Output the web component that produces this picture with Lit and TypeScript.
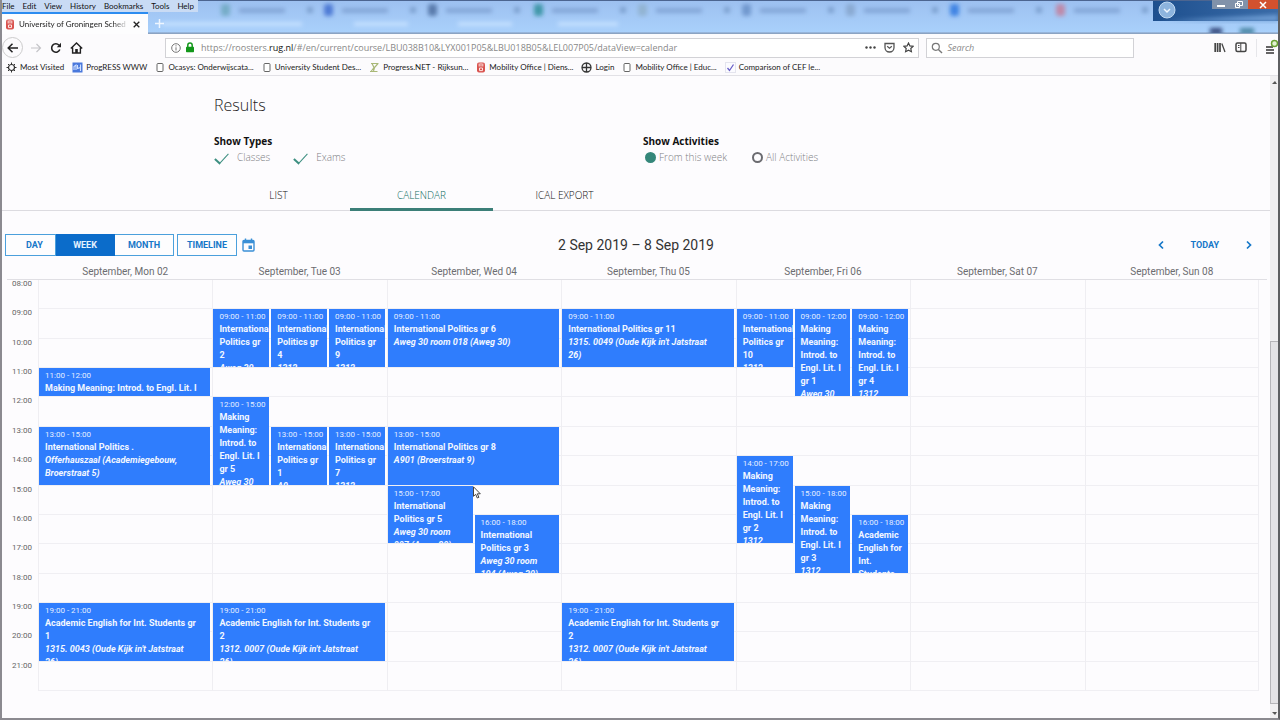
import { LitElement, html, css, svg, nothing } from "lit";
import { customElement, state } from "lit/decorators.js";
import { classMap } from "lit/directives/class-map.js";
import { styleMap } from "lit/directives/style-map.js";

interface Activity {
  from: number;
  to: number;
  title: string;
  place?: string;
  lane?: number;
}

interface Day {
  label: string;
  lanes: number;
  items: Activity[];
}

const FIRST_HOUR = 8;
const HOURS = Array.from({ length: 14 }, (_, i) => FIRST_HOUR + i);

const DAYS: Day[] = [
  {
    label: "September, Mon 02",
    lanes: 1,
    items: [
      { from: 11, to: 12, title: "Making Meaning: Introd. to Engl. Lit. I" },
      { from: 13, to: 15, title: "International Politics .", place: "Offerhauszaal (Academiegebouw, Broerstraat 5)" },
      { from: 19, to: 21, title: "Academic English for Int. Students gr 1", place: "1315. 0043 (Oude Kijk in't Jatstraat 26)" },
    ],
  },
  {
    label: "September, Tue 03",
    lanes: 3,
    items: [
      { from: 9, to: 11, lane: 1, title: "International Politics gr 2", place: "Aweg 30" },
      { from: 9, to: 11, lane: 2, title: "International Politics gr 4", place: "1312" },
      { from: 9, to: 11, lane: 3, title: "International Politics gr 9", place: "1312" },
      { from: 12, to: 15, lane: 1, title: "Making Meaning: Introd. to Engl. Lit. I gr 5", place: "Aweg 30" },
      { from: 13, to: 15, lane: 2, title: "International Politics gr 1", place: "A9" },
      { from: 13, to: 15, lane: 3, title: "International Politics gr 7", place: "1312" },
      { from: 19, to: 21, title: "Academic English for Int. Students gr 2", place: "1312. 0007 (Oude Kijk in't Jatstraat 26)" },
    ],
  },
  {
    label: "September, Wed 04",
    lanes: 2,
    items: [
      { from: 9, to: 11, title: "International Politics gr 6", place: "Aweg 30 room 018 (Aweg 30)" },
      { from: 13, to: 15, title: "International Politics gr 8", place: "A901 (Broerstraat 9)" },
      { from: 15, to: 17, lane: 1, title: "International Politics gr 5", place: "Aweg 30 room 007 (Aweg 30)" },
      { from: 16, to: 18, lane: 2, title: "International Politics gr 3", place: "Aweg 30 room 104 (Aweg 30)" },
    ],
  },
  {
    label: "September, Thu 05",
    lanes: 1,
    items: [
      { from: 9, to: 11, title: "International Politics gr 11", place: "1315. 0049 (Oude Kijk in't Jatstraat 26)" },
      { from: 19, to: 21, title: "Academic English for Int. Students gr 2", place: "1312. 0007 (Oude Kijk in't Jatstraat 26)" },
    ],
  },
  {
    label: "September, Fri 06",
    lanes: 3,
    items: [
      { from: 9, to: 11, lane: 1, title: "International Politics gr 10", place: "1312" },
      { from: 9, to: 12, lane: 2, title: "Making Meaning: Introd. to Engl. Lit. I gr 1", place: "Aweg 30" },
      { from: 9, to: 12, lane: 3, title: "Making Meaning: Introd. to Engl. Lit. I gr 4", place: "1312" },
      { from: 14, to: 17, lane: 1, title: "Making Meaning: Introd. to Engl. Lit. I gr 2", place: "1312" },
      { from: 15, to: 18, lane: 2, title: "Making Meaning: Introd. to Engl. Lit. I gr 3", place: "1312" },
      { from: 16, to: 18, lane: 3, title: "Academic English for Int. Students", place: "" },
    ],
  },
  { label: "September, Sat 07", lanes: 1, items: [] },
  { label: "September, Sun 08", lanes: 1, items: [] },
];

const clock = (h: number) => `${String(h).padStart(2, "0")}:00`;

/* ---------- icons ---------- */
const shield = html`<svg width="10" height="11" viewBox="0 0 10 11"><rect x="1" y="0.5" width="8" height="10" rx="2" fill="#d9534f"/><path d="M3.2 1.5v3M5 1v3.500M6.800 1.500v3M3.500 6h3v2.600h-3z" stroke="#fbe4e2" fill="none"/></svg>`;
const page = html`<svg width="10" height="11" viewBox="0 0 10 11"><rect x="2" y="1.500" width="6" height="8" rx="1" fill="#fff" stroke="#666"/></svg>`;
const gear = html`<svg width="11" height="11" viewBox="0 0 11 11"><circle cx="5.500" cy="5.500" r="3" fill="none" stroke="#333" stroke-width="1.200"/><path d="M5.500 .5v2M5.500 8.500v2M.5 5.500h2M8.500 5.500h2M2 2l1.300 1.300M7.700 7.700L9 9M9 2L7.700 3.300M2 9l1.300-1.300" stroke="#333"/></svg>`;
const wave = html`<svg width="11" height="11" viewBox="0 0 11 11"><rect x=".5" y=".5" width="10" height="10" fill="#4a78dc"/><path d="M2 8V4.500l2-1.500v5M5.500 3v3.500l3-1M8.500 2.500V9" stroke="#cfe0ff" fill="none" stroke-width="1.100"/></svg>`;
const hourglass = html`<svg width="11" height="11" viewBox="0 0 11 11"><path d="M2 1.500h7.500M9 1.500L5.500 5.500 4.500 9M1 9.500h7.500M3 1.500l2 4L2 9.500" stroke="#a9b878" fill="none" stroke-width="1.200"/></svg>`;
const globe = html`<svg width="11" height="11" viewBox="0 0 11 11"><circle cx="5.500" cy="5.500" r="4.500" fill="none" stroke="#333" stroke-width="1.300"/><path d="M5.500 1v9M1 5.500h9" stroke="#333" stroke-width="1.300"/></svg>`;
const tickIcon = html`<svg width="11" height="11" viewBox="0 0 11 11"><rect x=".5" y=".5" width="10" height="10" fill="#fbfbff" stroke="#e4e4ee"/><path d="M2.500 6l2 2.500L8.500 2.500" stroke="#6a5fc8" fill="none" stroke-width="1.300"/></svg>`;

const BOOKMARKS: [unknown, string][] = [
  [gear, "Most Visited"],
  [wave, "ProgRESS WWW"],
  [page, "Ocasys: Onderwijscata..."],
  [page, "University Student Des..."],
  [hourglass, "Progress.NET - Rijksun..."],
  [shield, "Mobility Office | Diens..."],
  [globe, "Login"],
  [page, "Mobility Office | Educ..."],
  [tickIcon, "Comparison of CEF le..."],
];

const MENUS = ["File", "Edit", "View", "History", "Bookmarks", "Tools", "Help"];

@customElement("browser-chrome")
export class BrowserChrome extends LitElement {
  static styles = css`
    :host { display: block; font-family: Lato, "Open Sans", sans-serif; color: #333; }
    * { box-sizing: border-box; }
    svg { display: block; flex: none; }
    button { border: 0; padding: 0; margin: 0; background: none; font: inherit; color: inherit; display: flex; align-items: center; }
    .strip { position: relative; height: 34px; overflow: hidden; background: linear-gradient(#a2c2f0, #a9cbf7 60%, #9dc0ec 92%, #8ea6c4); }
    .aero { position: absolute; inset: 0; width: 100%; height: 100%; }
    .controls { position: absolute; top: 0; right: 0; display: flex; height: 9px; }
    .controls button { width: 18px; justify-content: center; background: #8192aa; height: 9px; }
    .controls .close { width: 30px; background: #d2512e; }
    .front { position: relative; width: fit-content; }
    .menu { display: flex; gap: 8px; height: 12px; padding: 0 4px 0 0; background: #c9dbf4; font-size: 8px; line-height: 11px; color: #111; }
    .menu button::first-letter { text-decoration: underline; }
    .tabs { display: flex; align-items: center; height: 22px; }
    .tab { display: flex; align-items: center; gap: 4px; width: 146px; height: 22px; padding: 0 8px 0 3px; background: #fdfdfe; border-top: 2px solid #2c8cf0; font-size: 8px; color: #222; }
    .tab-name { flex: 1; white-space: nowrap; -webkit-mask-image: linear-gradient(90deg, #000 85%, transparent); }
    .plus { padding-left: 7px; }
    .nav { display: flex; align-items: center; height: 27px; background: #fcfbfd; }
    .buttons { display: flex; align-items: center; gap: 8px; width: 163px; flex: none; }
    .back { width: 21px; height: 21px; border: 1px solid #ccc; border-radius: 50%; justify-content: center; }
    .address { flex: 742 1 0; display: flex; align-items: center; height: 20px; border: 1px solid #d2d2d6; background: #fff; padding: 0 4px 0 5px; gap: 4px; min-width: 0; }
    .url { flex: 1; padding-left: 2px; font-family: "Open Sans", sans-serif; font-size: 9px; color: #888; white-space: nowrap; overflow: hidden; }
    .url b { font-weight: 400; color: #111; }
    .tools { display: flex; gap: 8px; align-items: center; }
    .search { flex: 196 1 0; display: flex; align-items: center; gap: 4px; height: 20px; margin-left: 7px; border: 1px solid #d2d2d6; background: #fff; padding: 0 5px 0 4px; }
    .search input { flex: 1; min-width: 0; border: 0; outline: 0; background: none; padding: 0; font: 9px "Open Sans", sans-serif; color: #333; }
    .search input::placeholder { color: #888; opacity: 1; font-style: italic; }
    .right { flex: 144 1 0; display: flex; justify-content: flex-end; align-items: center; gap: 9px; }
    .bookmarks { display: flex; gap: 8px; height: 15px; padding: 0 0 2px 4px; align-items: center; background: #fcfbfd; border-bottom: 1px solid #e2e1e6; font-size: 8px; }
    .bookmarks a { display: flex; align-items: center; gap: 3px; color: #222; text-decoration: none; white-space: nowrap; }
  `;

  render() {
    const ghosts = [
      [225, "#6fa8c0"], [328, "#3f6fd0"], [432, "#4c6fa0"], [538, "#2f8f9c"], [642, "#8fb0cc"],
      [746, "#6a90c8"], [850, "#86a6cc"], [954, "#2f78e0"], [1060, "#c47f9c"],
    ] as [number, string][];
    return html`
      <header class="strip">
        <svg class="aero" viewBox="0 0 1276 34" preserveAspectRatio="none" aria-hidden="true">
          <defs>
            <filter id="soft" x="-20%" y="-50%" width="140%" height="200%"><feGaussianBlur stdDeviation="2"/></filter>
            <linearGradient id="navy" x1="0" x2="1"><stop offset="0" stop-color="#1d4f8e"/><stop offset="1" stop-color="#3b6ca8"/></linearGradient>
            <linearGradient id="fade" x1="0" x2="0" y1="0" y2="1"><stop offset="0" stop-color="#9dc0f0"/><stop offset="1" stop-color="#a9d0fb"/></linearGradient>
          </defs>
          <rect width="1276" height="32" fill="url(#fade)"/>
          <rect x="1151" width="125" height="21" fill="url(#navy)"/>
          <path d="M1160 21h116v-6z" fill="#6f9fd6" filter="url(#soft)"/>
          <circle cx="1165" cy="10" r="8" fill="#8db4de" stroke="#c3dbf3"/>
          <path d="M1162 9l3 3 3-3" stroke="#eef6ff" fill="none" stroke-width="1.500"/>
          <g filter="url(#soft)">
            ${ghosts.map(([x, c]) => svg`
              <rect x=${x - 6} y="4" width="9" height="12" rx="3" fill=${c} opacity=".85"/>
              <rect x=${x + 12} y="8" width="46" height="5" fill="#6f93c4" opacity=".6"/>
              <rect x=${x + 80} y="7" width="6" height="6" fill="#6689b8" opacity=".6"/>`)}
            <rect x="160" y="22" width="140" height="4" fill="#c4e0ff"/>
            <rect x="352" y="22" width="54" height="4" fill="#c4e0ff"/>
            <rect x="456" y="22" width="54" height="4" fill="#c4e0ff"/>
            <rect x="556" y="22" width="60" height="4" fill="#c4e0ff"/>
            <rect x="1208" y="28" width="12" height="6" fill="#30467a"/>
            <rect x="1238" y="28" width="14" height="6" fill="#4a86a4"/>
          </g>
          <rect width="1276" height="1" fill="#4c6590"/>
          <rect y="33" width="1276" height="1" fill="#8ba3c2"/>
        </svg>
        <div class="controls">
          <button aria-label="Minimize"><svg width="8" height="8"><path d="M0 5h8" stroke="#fff" stroke-width="2"/></svg></button>
          <button aria-label="Restore"><svg width="8" height="8"><path d="M2.500 0.500h5v4h-5zM.5 2.500h4v4h-4z" stroke="#fff" fill="none"/></svg></button>
          <button class="close" aria-label="Close window"><svg width="8" height="8"><path d="M1 1l6 6M7 1L1 7" stroke="#fff" stroke-width="1.500"/></svg></button>
        </div>
        <div class="front">
          <nav class="menu">${MENUS.map((m) => html`<button>${m}</button>`)}</nav>
          <div class="tabs">
            <div class="tab">${shield}<span class="tab-name">University of Groningen Sched</span>
              <button aria-label="Close tab"><svg width="7" height="7"><path d="M.7 .7l5.600 5.600M6.300 .7L.7 6.300" stroke="#222" stroke-width="1.300"/></svg></button>
            </div>
            <button class="plus" aria-label="New tab"><svg width="9" height="9"><path d="M4.500 0v9M0 4.500h9" stroke="#eef6ff" stroke-width="1.500"/></svg></button>
          </div>
        </div>
      </header>
      <div class="nav">
        <div class="buttons">
          <button class="back" aria-label="Back"><svg width="11" height="10"><path d="M5.500 .7L1.200 5l4.300 4.300M1.200 5H11" stroke="#222" stroke-width="1.500" fill="none"/></svg></button>
          <button aria-label="Forward"><svg width="11" height="10"><path d="M5.500 1L9.500 5 5.500 9M9.500 5H0" stroke="#c4c4c8" stroke-width="1.200" fill="none"/></svg></button>
          <button aria-label="Reload"><svg width="12" height="12"><path d="M9.800 7.500A4.200 4.200 0 1 1 9 3.200" stroke="#222" stroke-width="1.600" fill="none"/><path d="M11 .8v4.400H6.800z" fill="#222"/></svg></button>
          <button aria-label="Home"><svg width="13" height="12"><path d="M.8 6.500L6.500 1l5.700 5.500M2.600 5.500v5.500h7.800V5.500" stroke="#222" stroke-width="1.400" fill="none"/><rect x="5.200" y="7" width="2.600" height="4" fill="#222"/></svg></button>
        </div>
        <div class="address">
          <svg width="10" height="10"><circle cx="5" cy="5" r="4.300" stroke="#777" fill="none"/><path d="M5 4.300V7.500M5 2.300v1.100" stroke="#777"/></svg>
          <svg width="10" height="11"><path d="M2.800 5V3.200a2.200 2.200 0 0 1 4.400 0V5" stroke="#12971a" stroke-width="1.500" fill="none"/><rect x="1" y="4.800" width="8" height="5.500" rx=".7" fill="#12971a"/></svg>
          <span class="url">https://roosters.<b>rug.nl</b>/#/en/current/course/LBU038B10&amp;LYX001P05&amp;LBU018B05&amp;LEL007P05/dataView=calendar</span>
          <div class="tools">
            <button aria-label="Page actions"><svg width="11" height="11"><circle cx="1.500" cy="5.500" r="1.200" fill="#444"/><circle cx="5.500" cy="5.500" r="1.200" fill="#444"/><circle cx="9.500" cy="5.500" r="1.200" fill="#444"/></svg></button>
            <button aria-label="Save to Pocket"><svg width="11" height="11"><path d="M1 1.500h9v4a4.500 4.500 0 0 1-9 0z" stroke="#555" stroke-width="1.300" fill="none"/><path d="M3.200 4.300l2.300 2 2.300-2" stroke="#555" stroke-width="1.200" fill="none"/></svg></button>
            <button aria-label="Bookmark"><svg width="11" height="11"><path d="M5.500 1l1.400 2.900 3.200.4-2.300 2.200.6 3.200-2.900-1.600-2.900 1.600.6-3.200L.9 4.300l3.200-.4z" stroke="#444" stroke-width="1.200" fill="none"/></svg></button>
          </div>
        </div>
        <label class="search">
          <svg width="12" height="12"><circle cx="4.800" cy="4.800" r="3.500" stroke="#777" stroke-width="1.200" fill="none"/><path d="M7.400 7.400L11 11" stroke="#777" stroke-width="1.400"/></svg>
          <input type="text" placeholder="Search" aria-label="Search" />
        </label>
        <div class="right">
          <button aria-label="Library"><svg width="12" height="11"><path d="M1.200 1v9M3.600 1v9M6 1v9" stroke="#444" stroke-width="1.700"/><path d="M7.800 1.500L11 10" stroke="#444" stroke-width="1.300"/></svg></button>
          <button aria-label="Sidebars"><svg width="12" height="11"><rect x="1" y="1" width="10" height="8.500" rx="1.500" stroke="#444" stroke-width="1.500" fill="none"/><path d="M5.800 1v8.500M3 3.500h1.500M3 5.500h1.500" stroke="#444"/></svg></button>
          <svg width="1" height="18"><rect width="1" height="18" fill="#e6e6ea"/></svg>
          <button aria-label="Menu"><svg width="12" height="18"><path d="M0 8h7M0 11h8M0 14h8" stroke="#333" stroke-width="1.400"/><circle cx="8.500" cy="4.500" r="3" fill="#e4f2d4" stroke="#6aa233" stroke-width="1.500"/></svg></button>
        </div>
      </div>
      <nav class="bookmarks">${BOOKMARKS.map(([icon, name]) => html`<a href="#">${icon}<span>${name}</span></a>`)}</nav>
    `;
  }
}

@customElement("week-calendar")
export class WeekCalendar extends LitElement {
  static styles = css`
    :host { display: flex; flex-direction: column; flex: 1; min-height: 0; min-width: 0; font-family: Roboto, sans-serif; }
    * { box-sizing: border-box; }
    button { margin: 0; font: 700 9px Roboto, sans-serif; cursor: pointer; }
    .bar { display: grid; grid-template-columns: 1fr auto 1fr; align-items: center; }
    .views { display: flex; align-items: center; padding-left: 3px; }
    .view { height: 22px; width: 59px; padding: 0; border: 1px solid #4ba0dc; border-left-width: 0; background: #fdfdfe; color: #1577c8; }
    .view:first-child { width: 51px; padding-left: 8px; border-left-width: 1px; }
    .view.on { background: #0b6cca; border-color: #0b6cca; color: #e4f2ff; }
    .view.alone { width: 60px; border-left-width: 1px; margin-left: 3px; }
    .icon { display: flex; padding: 0; margin-left: 5px; border: 0; background: none; }
    .range { margin: 0; font-size: 14px; line-height: 16px; font-weight: 400; color: #333; }
    .move { display: flex; justify-content: flex-end; align-items: center; gap: 24px; padding-right: 15px; }
    .move button { display: flex; border: 0; padding: 0; background: none; color: #1577c8; }
    .heads { display: grid; grid-template-columns: repeat(7, minmax(0, 1fr)); height: 24px; padding: 8px 8px 0 31px; margin: 0 3px 0 5px; border-bottom: 1px solid #e0dfe4; font-size: 10px; line-height: 15px; color: #6c6c70; text-align: center; }
    .body { flex: 1; min-height: 0; display: grid; grid-template-columns: 36px repeat(7, minmax(0, 1fr)); padding-right: 11px; }
    .hours, .day { display: grid; grid-template-rows: repeat(14, minmax(0, 1fr)); min-height: 0; }
    .hours span { font-size: 8px; line-height: 8px; color: #666; padding-right: 6px; text-align: right; }
    .day { border-left: 1px solid #efeef2; }
    .day:last-child { border-right: 1px solid #efeef2; }
    .slot { grid-column: 1 / -1; border-bottom: 1px solid #f0eff3; }
    .event { margin: 0 2px 1px 0; padding: 1px 0 0 6px; overflow: hidden; background: #2f7dfd; color: #f2f7ff; }
    .time { font-size: 8px; line-height: 13px; white-space: nowrap; color: #e4eeff; }
    .title, .place { font-size: 9px; line-height: 13px; font-weight: 700; padding-right: 7%; }
    .place { font-style: italic; padding-right: 10%; }
  `;

  @state() private view = "WEEK";

  private viewButton(name: string, alone = false) {
    return html`<button class=${classMap({ view: true, on: this.view === name, alone })} @click=${() => (this.view = name)}>${name}</button>`;
  }

  private event(e: Activity) {
    const place = styleMap({
      gridRow: `${e.from - FIRST_HOUR + 1} / ${e.to - FIRST_HOUR + 1}`,
      gridColumn: e.lane ? String(e.lane) : "1 / -1",
    });
    return html`<article class="event" style=${place}>
      <div class="time">${clock(e.from)} - ${clock(e.to)}</div>
      <div class="title">${e.title}</div>
      ${e.place ? html`<div class="place">${e.place}</div>` : nothing}
    </article>`;
  }

  render() {
    return html`
      <div class="bar">
        <div class="views">
          ${this.viewButton("DAY")}${this.viewButton("WEEK")}${this.viewButton("MONTH")}${this.viewButton("TIMELINE", true)}
          <button class="icon" aria-label="Pick a date"><svg width="13" height="14" viewBox="0 0 13 14"><rect x="1" y="2.500" width="11" height="10.500" rx="1" fill="none" stroke="#3a8fd6" stroke-width="1.400"/><path d="M1 4h11" stroke="#3a8fd6" stroke-width="2.600"/><path d="M3.500 .5v3M9.500 .5v3" stroke="#3a8fd6" stroke-width="1.400"/><rect x="6.500" y="7.500" width="3.500" height="3.500" fill="#3a8fd6"/></svg></button>
        </div>
        <h2 class="range">2 Sep 2019 – 8 Sep 2019</h2>
        <div class="move">
          <button aria-label="Previous"><svg width="12" height="10"><path d="M8 1.500L4.500 5 8 8.500" stroke="#1577c8" stroke-width="1.700" fill="none"/></svg></button>
          <button>TODAY</button>
          <button aria-label="Next"><svg width="12" height="10"><path d="M4 1.500L7.500 5 4 8.500" stroke="#1577c8" stroke-width="1.700" fill="none"/></svg></button>
        </div>
      </div>
      <div class="heads">${DAYS.map((d) => html`<span>${d.label}</span>`)}</div>
      <div class="body">
        <div class="hours">${HOURS.map((h) => html`<span>${clock(h)}</span>`)}</div>
        ${DAYS.map(
          (d) => html`<section class="day" aria-label=${d.label} style=${styleMap({ gridTemplateColumns: `repeat(${d.lanes}, minmax(0, 1fr))` })}>
            ${HOURS.map((h, i) => html`<div class="slot" style=${styleMap({ gridRow: String(i + 1) })}></div>`)}
            ${d.items.map((e) => this.event(e))}
          </section>`,
        )}
      </div>
    `;
  }
}

@customElement("app-root")
export class AppRoot extends LitElement {
  static styles = css`
    :host { display: flex; flex-direction: column; height: 100vh; box-sizing: border-box; border: solid #8b8a90; border-width: 0 2px 2px; border-right-color: #5e5f62; background: #fdfcfe; font-family: "Open Sans", "Noto Sans", sans-serif; position: relative; overflow: hidden; }
    * { box-sizing: border-box; }
    .view { flex: 1; display: flex; min-height: 0; }
    main { flex: 1; min-width: 0; display: flex; flex-direction: column; padding-bottom: 27px; }
    .scroll { width: 8px; flex: none; display: flex; flex-direction: column; background: #f0eff1; color: #555; }
    .scroll svg { display: block; }
    .track { flex: 251; }
    .thumb { flex: 361; background: #e3e2e5; border: 1px solid #b5b4b8; border-right: 0; }
    .wrap { width: 100%; max-width: 858px; margin: 0 auto; }
    h1 { margin: 0; padding: 17px 7px 0; font-size: 16px; line-height: 24px; font-weight: 300; color: #222; }
    .filters { display: grid; grid-template-columns: 1fr 1fr; padding-top: 16px; }
    fieldset { border: 0; margin: 0; padding: 0 7px; }
    legend { padding: 0; font-size: 10px; line-height: 16px; font-weight: 700; color: #111; }
    .choices { display: flex; gap: 23px; height: 16px; align-items: center; }
    label { display: flex; align-items: center; font-size: 10px; line-height: 16px; font-weight: 300; color: #808084; }
    input { appearance: none; margin: 0; flex: none; }
    .tick { width: 15px; height: 15px; margin-right: 8px; }
    .tick::before { content: ""; display: block; width: 6px; height: 12px; margin-left: 4px; border: solid #3c8f80; border-width: 0 1px 2px 0; transform: rotate(42deg); }
    .tick:not(:checked)::before { border-color: #ddd; }
    .radio { width: 11px; height: 11px; margin: 0 3px 0 2px; border: 2px solid #6b6b70; border-radius: 50%; }
    .radio:checked { border-color: #35877a; background: #35877a; }
    .tabs { border-bottom: 1px solid #dcdbe0; padding-top: 13px; }
    .tabs .wrap { display: grid; grid-template-columns: repeat(6, 1fr); }
    .tabs button { height: 33px; margin: 0 0 -1px; padding: 3px 0 0; border: 0; border-bottom: 3px solid transparent; background: none; font: 300 10px/16px "Open Sans", sans-serif; color: #111; }
    .tabs .on { color: #0f6f62; border-bottom-color: #3c7f78; }
    .cal { flex: 1; min-height: 0; display: flex; padding-top: 23px; }
    .cursor { position: absolute; left: 470px; top: 486px; }
  `;

  @state() private tab = "CALENDAR";

  render() {
    return html`
      <browser-chrome></browser-chrome>
      <div class="view">
        <main>
          <div class="wrap">
            <h1>Results</h1>
            <div class="filters">
              <fieldset>
                <legend>Show Types</legend>
                <div class="choices">
                  <label><input class="tick" type="checkbox" checked />Classes</label>
                  <label><input class="tick" type="checkbox" checked />Exams</label>
                </div>
              </fieldset>
              <fieldset>
                <legend>Show Activities</legend>
                <div class="choices">
                  <label><input class="radio" type="radio" name="range" checked />From this week</label>
                  <label><input class="radio" type="radio" name="range" />All Activities</label>
                </div>
              </fieldset>
            </div>
          </div>
          <nav class="tabs">
            <div class="wrap">
              ${["LIST", "CALENDAR", "ICAL EXPORT"].map(
                (t) => html`<button class=${classMap({ on: this.tab === t })} @click=${() => (this.tab = t)}>${t}</button>`,
              )}
            </div>
          </nav>
          <div class="cal"><week-calendar></week-calendar></div>
        </main>
        <div class="scroll" aria-hidden="true">
          <svg width="8" height="14"><path d="M2 8h5L5 5z" fill="#555"/></svg>
          <div class="track"></div>
          <div class="thumb"></div>
          <svg width="8" height="14"><path d="M2 8h5l-2 3z" fill="#555"/></svg>
        </div>
      </div>
      <svg class="cursor" width="10" height="14" aria-hidden="true"><path d="M1.500 .8v9.500l2.200-2 1.600 3.700 1.600-.7-1.600-3.500h3z" fill="#fff" stroke="#444"/></svg>
    `;
  }
}
